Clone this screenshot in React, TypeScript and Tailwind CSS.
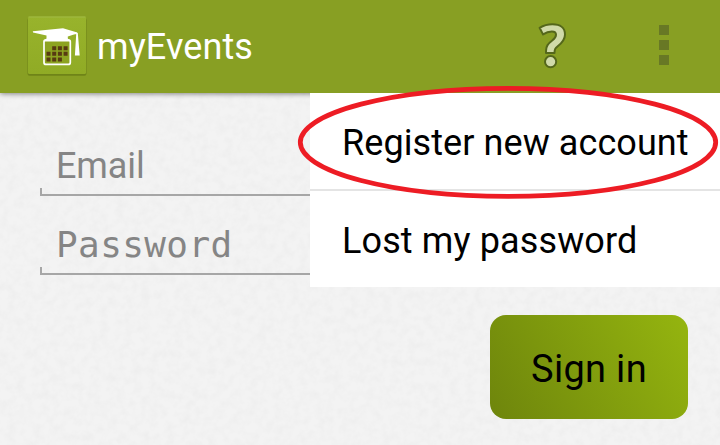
import React from "react";

function AppIcon() {
  return (
    <svg width="62" height="62" viewBox="0 0 62 62" className="shrink-0">
      <defs>
        <linearGradient id="tile" x1="0" y1="0" x2="0" y2="1">
          <stop offset="0" stopColor="#98b32c" />
          <stop offset="1" stopColor="#90ab25" />
        </linearGradient>
      </defs>
      <rect x="1.5" y="2" width="59" height="57.8" rx="2" fill="#6f8418" />
      <rect x="2" y="0.5" width="58" height="57.5" rx="1.5" fill="url(#tile)" />
      <path d="M2.5 1H59.5" stroke="#a0b944" strokeWidth="1" />
      <rect x="18" y="23.8" width="26.3" height="24.6" rx="2" fill="#8da321" stroke="#fff" strokeWidth="1.7" />
      <path d="M6.8 15.2 L37 12.2 L51.3 16.6 L51 17.6 L41.8 20.6 V22.5 L44.8 25.4 H17.5 L20.5 22.5 V19.6 L7 16.5 Z" fill="#fff" />
      <path d="M48.5 16.2 L51.8 17 L53.7 39.5 H48.9 L50.2 18.3 L44 17.8 Z" fill="#fff" />
      <g fill="#573a12">
        <path d="M26.2 30.2h4v4h-4zM31.9 30.2h4v4h-4zM37.6 30.2h4v4h-4z" />
        <path d="M20.5 35.8h4v4h-4zM26.2 35.8h4v4h-4zM31.9 35.8h4v4h-4zM37.6 35.8h4v4h-4z" />
        <path d="M20.5 41.5h4v4h-4zM26.2 41.5h4v4h-4zM31.9 41.5h4v4h-4z" />
      </g>
    </svg>
  );
}

function HelpIcon() {
  return (
    <svg width="32" height="50" viewBox="0 0 32 50" className="shrink-0">
      <g fill="#d0daa9" stroke="#54671b" strokeWidth="2" strokeLinejoin="round">
        <path d="M3.6 5.8 C8 3.2 12 2.3 16.4 2.3 C24.4 2.3 29 6 29 12.4 C29 17.4 26.4 20.4 22 24 C19.2 26.2 18.5 27.2 18.5 31 H10 V29 C10 24 12 21.8 16.2 18.5 C19 16.3 20 15 20 12.7 C20 10.6 18.5 9.4 15.8 9.4 C13 9.4 10 10.4 7 12.4 Z" />
        <circle cx="14.6" cy="39.7" r="5.6" />
      </g>
    </svg>
  );
}

function PaperTexture() {
  return (
    <svg className="absolute inset-0 opacity-[0.018]" width="720" height="445">
      <filter id="paper">
        <feTurbulence type="fractalNoise" baseFrequency="0.12" numOctaves="3" />
        <feColorMatrix type="matrix" values="0 0 0 0 0  0 0 0 0 0  0 0 0 0 0  1.6 0 0 0 -0.5" />
      </filter>
      <rect width="720" height="445" filter="url(#paper)" />
    </svg>
  );
}

function Field({ label, mono = false }: { label: string; mono?: boolean }) {
  return (
    <div className="flex h-[79px] flex-col justify-end">
      <div
        className={
          mono
            ? "pl-4 font-['DejaVu_Sans_Mono',monospace] text-[36px] leading-[42px] tracking-[0.4px] text-[#858585]"
            : "pl-4 text-[36px] leading-[42px] tracking-[-0.1px] text-[#858585]"
        }
      >
        {label}
      </div>
      <div className="mt-px h-2 border-b-2 border-l-2 border-[#a6a6a6]" />
    </div>
  );
}

function Menu() {
  return (
    <div className="absolute top-[93px] left-[310px] h-[194px] w-[410px] bg-white text-[36px] leading-[42px] text-black">
      <div className="flex h-[98px] items-center border-b-2 border-[#e4e4e4] pt-[3px] pl-8 tracking-[0.08px] whitespace-nowrap">
        Register new account
      </div>
      <div className="flex h-24 items-center pt-[3px] pl-8 tracking-[0.12px] whitespace-nowrap">Lost my password</div>
    </div>
  );
}

export default function App() {
  return (
    <div className="relative h-[445px] w-[720px] overflow-hidden bg-[#f3f3f3] font-['Roboto',sans-serif]">
      <PaperTexture />
      <header className="relative flex h-[93px] items-center bg-[#889f23] pr-[51px] pl-[26px] shadow-[0_1px_5px_rgba(0,0,0,0.45)]">
        <AppIcon />
        <h1 className="ml-[9px] flex-1 text-[36px] leading-[42px] tracking-[0.1px] text-white">myEvents</h1>
        <HelpIcon />
        <div className="ml-[91px] flex w-2.5 flex-col gap-[5px] pt-px pb-1">
          <span className="h-2.5 bg-[#687825]" />
          <span className="h-2.5 bg-[#687825]" />
          <span className="h-2.5 bg-[#687825]" />
        </div>
      </header>
      <main className="relative flex flex-col px-8 pt-6">
        <div className="ml-2 flex flex-col">
          <Field label="Email" />
          <Field label="Password" mono />
        </div>
        <button className="mt-10 h-[104px] w-[198px] self-end rounded-[16px] bg-[linear-gradient(60deg,#6e850c,#95b50f)] pt-1 text-[38px] tracking-[0.3px] text-black">
          Sign in
        </button>
      </main>
      <Menu />
      <svg className="absolute inset-0" width="720" height="445" viewBox="0 0 720 445">
        <ellipse cx="508" cy="142.3" rx="207.7" ry="54" fill="none" stroke="#ed1c24" strokeWidth="4.8" />
      </svg>
    </div>
  );
}
